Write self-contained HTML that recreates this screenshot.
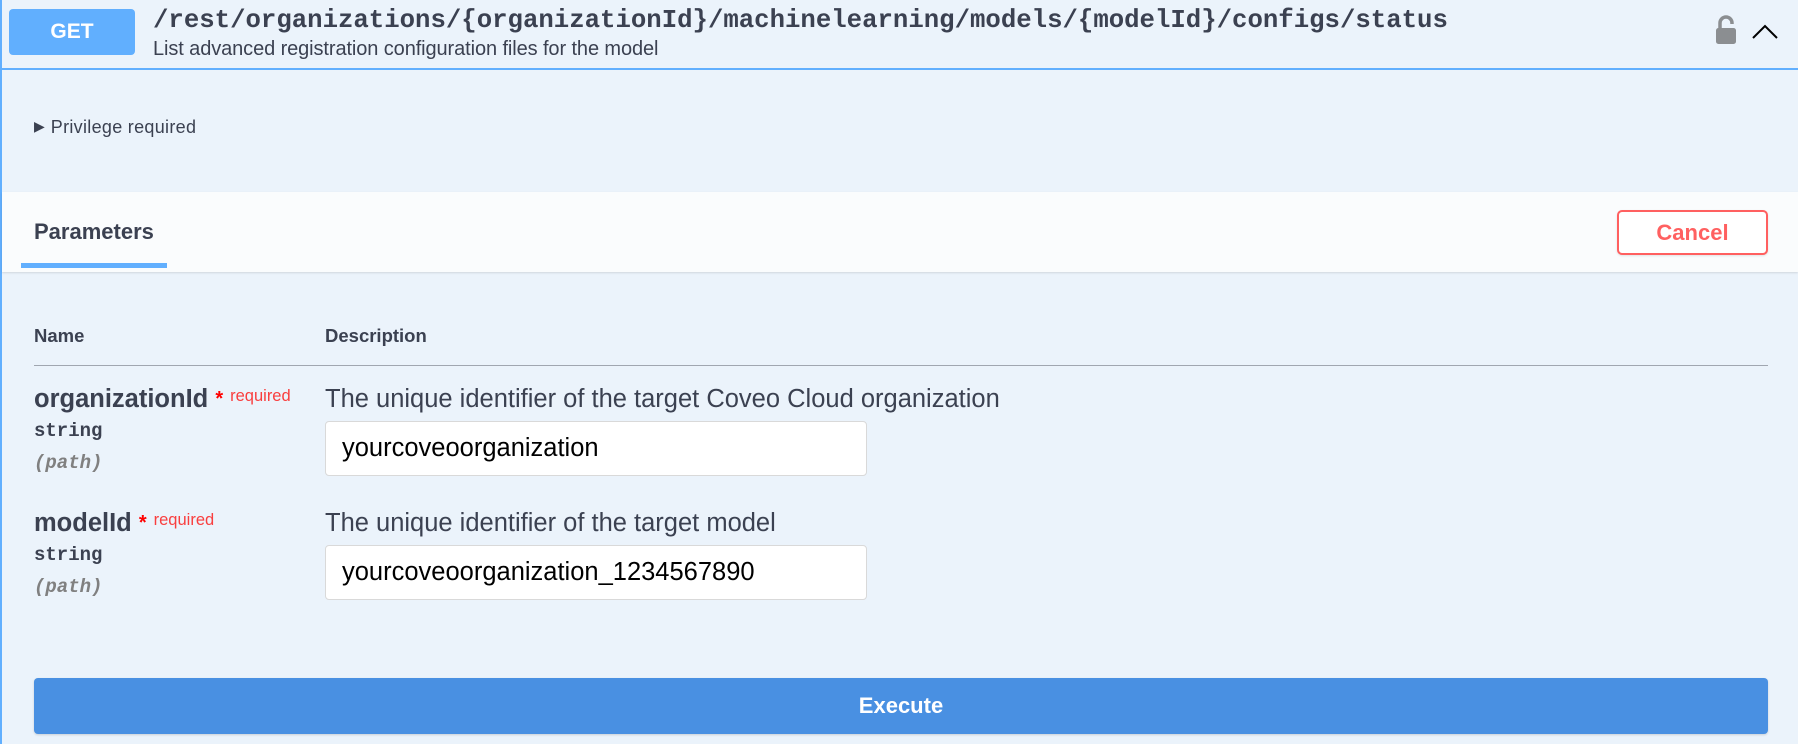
<!DOCTYPE html>
<html><head><meta charset="utf-8"><style>
*{margin:0;padding:0;box-sizing:border-box}
body{width:1798px;height:744px;background:#ebf3fb;font-family:"Liberation Sans",sans-serif;color:#3b4151;position:relative;overflow:hidden}
.abs{position:absolute;white-space:nowrap}
</style></head><body>
<div class="abs" style="left:0;top:0;width:2px;height:744px;background:#61affe"></div>
<div class="abs" style="left:9px;top:9px;width:126px;height:46px;background:#61affe;border-radius:4px;color:#fff;font-weight:bold;font-size:21px;line-height:46px;text-align:center">GET</div>
<div class="abs" style="left:153px;top:5px;font-family:'Liberation Mono',monospace;font-weight:bold;font-size:25.7px;line-height:32px">/rest/organizations/{organizationId}/machinelearning/models/{modelId}/configs/status</div>
<div class="abs" style="left:153px;top:38px;font-size:20px;line-height:22px;letter-spacing:-0.1px">List advanced registration configuration files for the model</div>
<svg class="abs" style="left:1714px;top:15px" width="24" height="30" viewBox="0 0 24 30"><path d="M6 14V8a6 6 0 0 1 12 0v1" fill="none" stroke="#8b8e91" stroke-width="3.5"/><rect x="2" y="13" width="20" height="16" rx="2.5" fill="#8b8e91"/></svg>
<svg class="abs" style="left:1752px;top:24px" width="26" height="16" viewBox="0 0 26 16"><path d="M1 14L13 2L25 14" fill="none" stroke="#000" stroke-width="2"/></svg>
<div class="abs" style="left:0;top:68px;width:1798px;height:2px;background:#61affe"></div>
<div class="abs" style="left:34px;top:116px;font-size:18px;line-height:22px"><span style="font-size:14px;position:relative;top:-2px">&#9654;&#xFE0E;</span><span style="margin-left:6px;letter-spacing:0.3px">Privilege required</span></div>
<div class="abs" style="left:2px;top:192px;width:1796px;height:80px;background:#fafcfd;box-shadow:0 1px 2px rgba(0,0,0,.12)"></div>
<div class="abs" style="left:34px;top:219px;font-size:22px;font-weight:bold;line-height:26px">Parameters</div>
<div class="abs" style="left:21px;top:263px;width:146px;height:5px;background:#61affe"></div>
<div class="abs" style="left:1617px;top:210px;width:151px;height:45px;border:2px solid #ff6060;border-radius:5px;color:#ff6060;font-weight:bold;font-size:22px;line-height:41px;text-align:center;background:#fff;box-shadow:0 1px 2px rgba(0,0,0,.1)">Cancel</div>
<div class="abs" style="left:34px;top:325px;font-size:18.5px;font-weight:bold;line-height:22px">Name</div>
<div class="abs" style="left:325px;top:325px;font-size:18.5px;font-weight:bold;line-height:22px">Description</div>
<div class="abs" style="left:34px;top:365px;width:1734px;height:1px;background:#a0a6b0"></div>

<div class="abs" style="left:34px;top:384px;font-size:25.5px;font-weight:bold;line-height:30px">organizationId <span style="color:#f00;font-size:20px;vertical-align:top">*</span><span style="color:#f93e3e;font-size:16.5px;font-weight:normal;vertical-align:top;position:relative;top:-3px;margin-left:7px">required</span></div>
<div class="abs" style="left:34px;top:420px;font-family:'Liberation Mono',monospace;font-weight:bold;font-size:19px">string</div>
<div class="abs" style="left:34px;top:452px;font-family:'Liberation Mono',monospace;font-weight:bold;font-style:italic;font-size:19px;color:#808080">(path)</div>
<div class="abs" style="left:325px;top:384px;font-size:25.5px;line-height:30px">The unique identifier of the target Coveo Cloud organization</div>
<div class="abs" style="left:325px;top:421px;width:542px;height:55px;background:#fff;border:1px solid #d9d9d9;border-radius:4px;font-size:25.5px;line-height:53px;padding-left:16px;color:#000">yourcoveoorganization</div>

<div class="abs" style="left:34px;top:508px;font-size:25.5px;font-weight:bold;line-height:30px">modelId <span style="color:#f00;font-size:20px;vertical-align:top">*</span><span style="color:#f93e3e;font-size:16.5px;font-weight:normal;vertical-align:top;position:relative;top:-3px;margin-left:7px">required</span></div>
<div class="abs" style="left:34px;top:544px;font-family:'Liberation Mono',monospace;font-weight:bold;font-size:19px">string</div>
<div class="abs" style="left:34px;top:576px;font-family:'Liberation Mono',monospace;font-weight:bold;font-style:italic;font-size:19px;color:#808080">(path)</div>
<div class="abs" style="left:325px;top:508px;font-size:25.5px;line-height:30px">The unique identifier of the target model</div>
<div class="abs" style="left:325px;top:545px;width:542px;height:55px;background:#fff;border:1px solid #d9d9d9;border-radius:4px;font-size:25.5px;line-height:53px;padding-left:16px;color:#000">yourcoveoorganization_1234567890</div>

<div class="abs" style="left:34px;top:678px;width:1734px;height:56px;background:#4990e2;border-radius:4px;color:#fff;font-weight:bold;font-size:22px;line-height:56px;text-align:center;box-shadow:0 1px 2px rgba(0,0,0,.15)">Execute</div>
</body></html>
